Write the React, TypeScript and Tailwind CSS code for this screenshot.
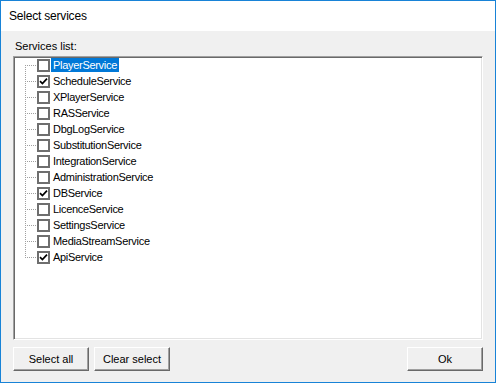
const services = [
  { name: "PlayerService", checked: false },
  { name: "ScheduleService", checked: true },
  { name: "XPlayerService", checked: false },
  { name: "RASService", checked: false },
  { name: "DbgLogService", checked: false },
  { name: "SubstitutionService", checked: false },
  { name: "IntegrationService", checked: false },
  { name: "AdministrationService", checked: false },
  { name: "DBService", checked: true },
  { name: "LicenceService", checked: false },
  { name: "SettingsService", checked: false },
  { name: "MediaStreamService", checked: false },
  { name: "ApiService", checked: true },
];

// dotted tree connector, same as the old WinForms TreeView lines
function TreeLines({ first, last }: { first: boolean; last: boolean }) {
  return (
    <svg width="20" height="16" viewBox="0 0 20 16" className="shrink-0">
      <line
        x1="9.5"
        y1={first ? 8 : 0}
        x2="9.5"
        y2={last ? 9 : 16}
        stroke="#a0a0a0"
        strokeWidth="1"
        strokeDasharray="1 1"
      />
      <line x1="11" y1="8.5" x2="20" y2="8.5" stroke="#a0a0a0" strokeWidth="1" strokeDasharray="1 1" />
    </svg>
  );
}

function CheckBox({ checked }: { checked: boolean }) {
  return (
    <span className="w-[13px] h-[13px] shrink-0 border-2 border-[#6e6e6e] bg-white flex items-center justify-center">
      {checked && (
        <svg width="9" height="9" viewBox="0 0 9 9">
          <path d="M1 4.2 L3.4 6.6 L8 1.6" fill="none" stroke="#000" strokeWidth="1.7" />
        </svg>
      )}
    </span>
  );
}

function WinButton({ label, className = "" }: { label: string; className?: string }) {
  return (
    <button
      type="button"
      className={`w-[76px] h-[24px] bg-[#f0f0f0] border border-t-white border-l-white border-b-[#696969] border-r-[#696969] shadow-[inset_-1px_-1px_0_#a0a0a0] text-[11px] text-black ${className}`}
    >
      {label}
    </button>
  );
}

export default function App() {
  return (
    <div
      className="w-[496px] h-[383px] border border-[#1883d7] bg-[#f0f0f0] flex flex-col"
      style={{ fontFamily: '"Liberation Sans", Arial, sans-serif' }}
    >
      <div className="h-[30px] bg-white flex items-center pl-[8px] text-[12px] tracking-[-0.2px] text-black">
        Select services
      </div>

      <div className="flex-1 flex flex-col px-[12px] pt-[9px]">
        <div className="text-[11px] leading-[13px] pl-[2px] text-black">Services list:</div>

        <div className="mt-[3px] h-[284px] bg-white border border-t-[#a0a0a0] border-l-[#a0a0a0] border-b-white border-r-white shadow-[inset_1px_1px_0_#696969,inset_-1px_-1px_0_#e3e3e3] pl-[2px] pt-[0px]">
          {services.map((s, i) => (
            <div key={s.name} className="h-[16px] flex items-center">
              <TreeLines first={i === 0} last={i === services.length - 1} />
              <span className="ml-[1px]">
                <CheckBox checked={s.checked} />
              </span>
              <span
                className={`ml-[1px] px-[2px] h-[14px] flex items-center text-[11px] tracking-[-0.3px] leading-none ${
                  i === 0 ? "bg-[#0078d7] text-white" : "text-black"
                }`}
              >
                {s.name}
              </span>
            </div>
          ))}
        </div>

        <div className="mt-[7px] flex items-center gap-[5px]">
          <WinButton label="Select all" />
          <WinButton label="Clear select" />
          <WinButton label="Ok" className="ml-auto" />
        </div>
      </div>
    </div>
  );
}
